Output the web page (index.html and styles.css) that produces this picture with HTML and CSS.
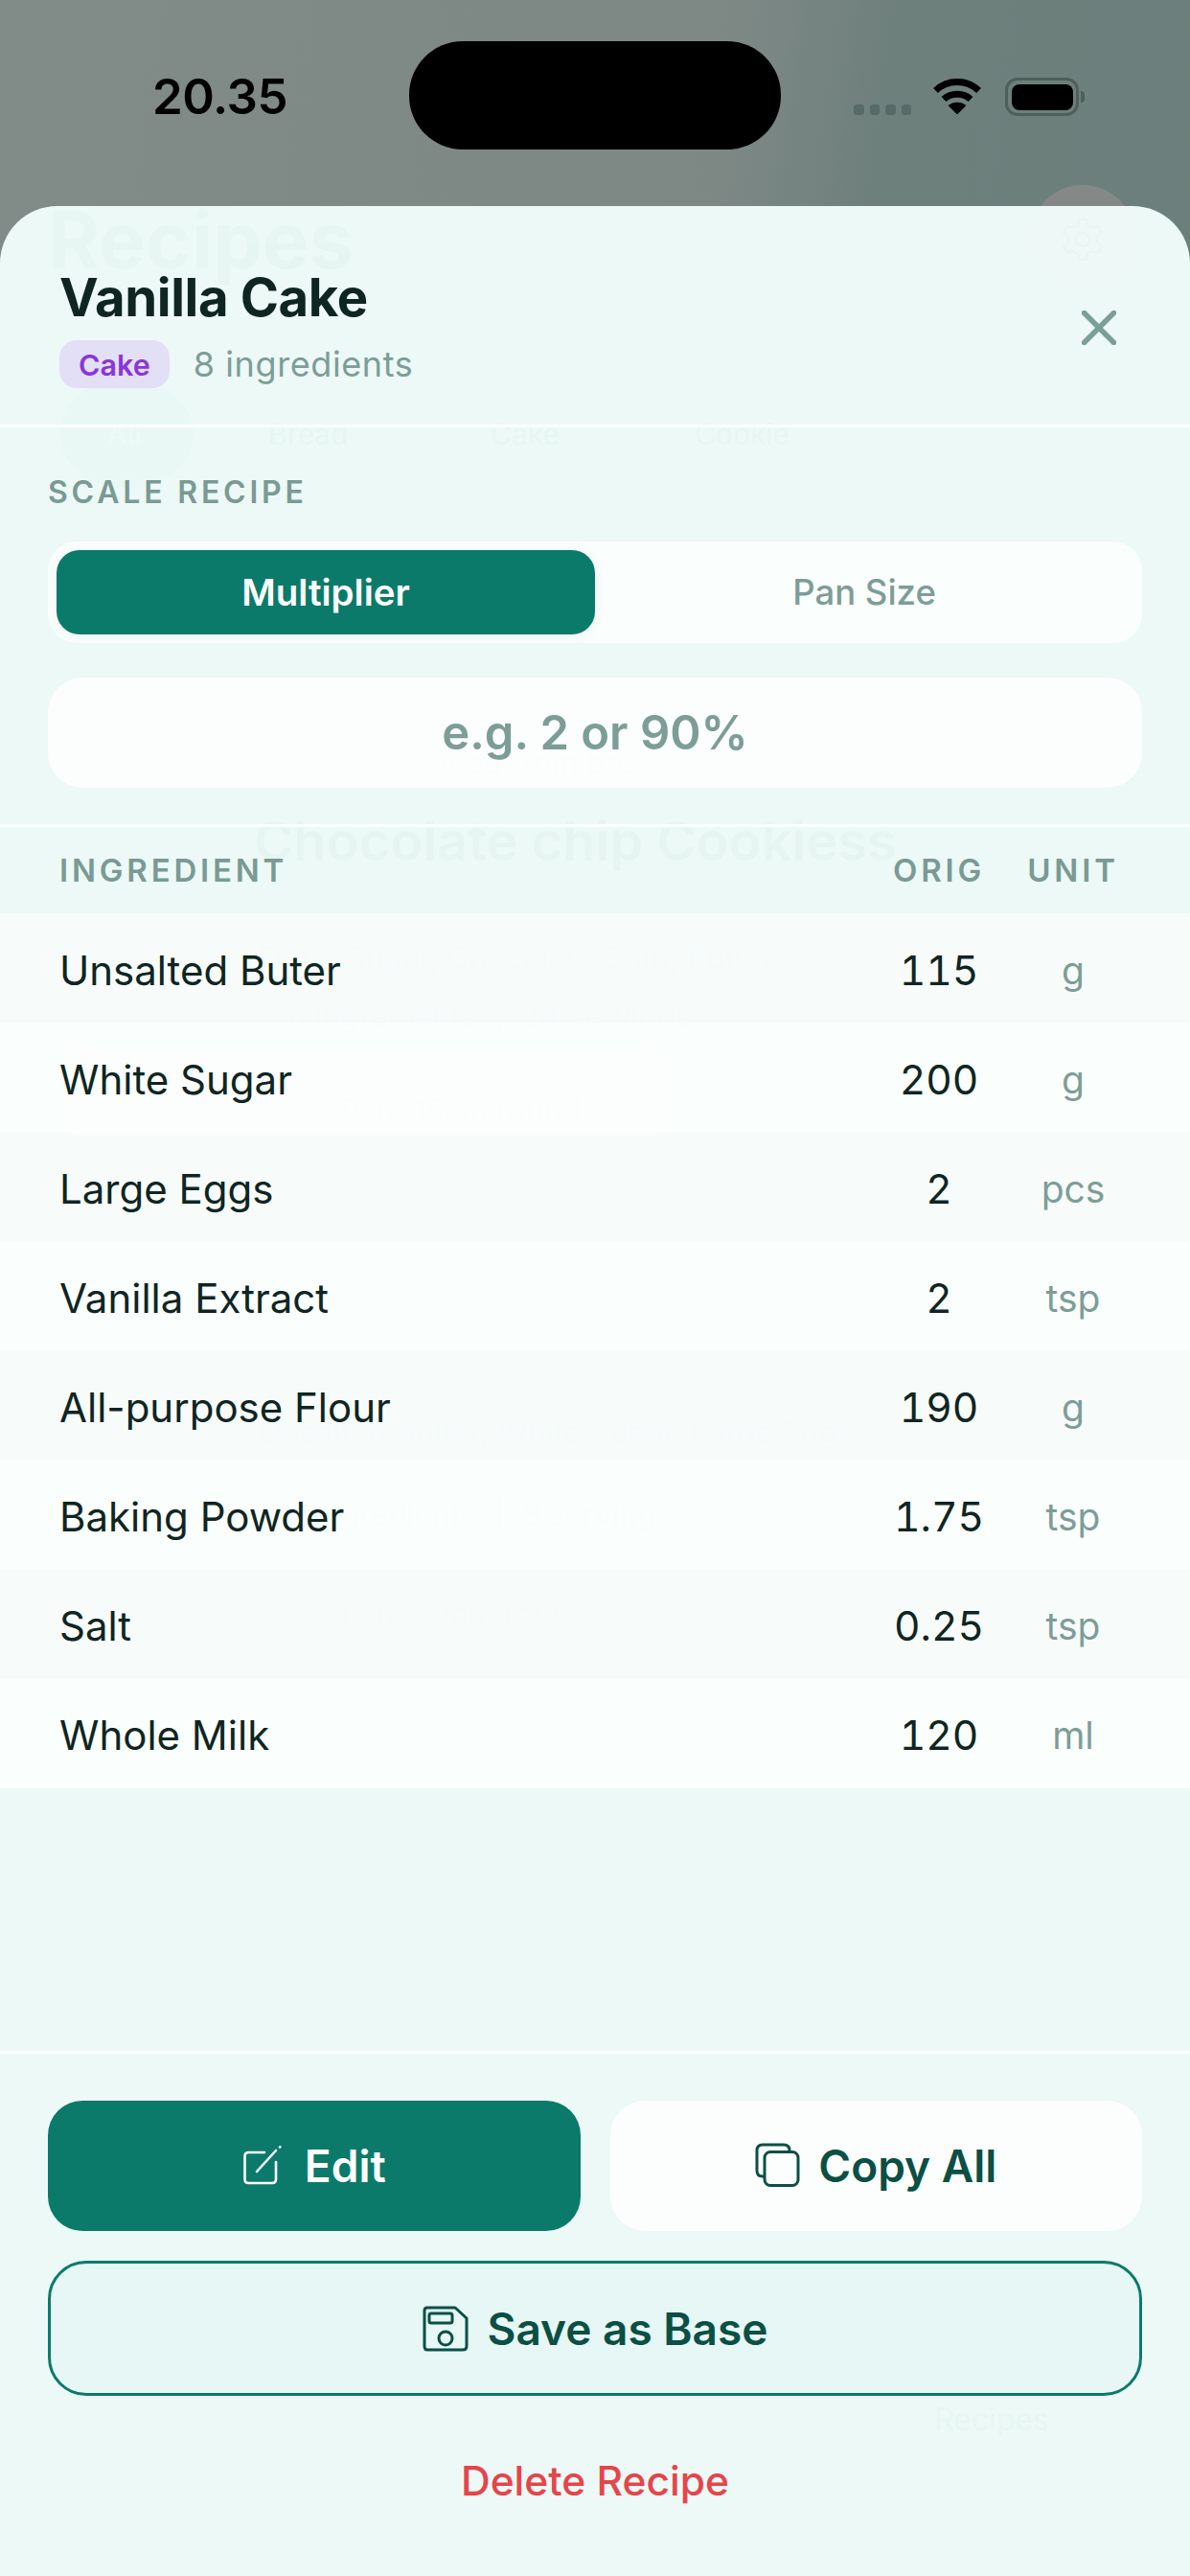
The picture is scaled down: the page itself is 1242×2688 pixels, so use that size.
FILE: index.html
```html
<!DOCTYPE html>
<html lang="en">
<head>
<meta charset="utf-8">
<title>Vanilla Cake</title>
<link rel="stylesheet" href="styles.css">
</head>
<body>
<div class="screen">
  <div class="gear-back"></div>
  <header class="status">
    <div class="time">20.35</div>
    <div class="island"></div>
    <div class="status-icons">
      <div class="signal"><i></i><i></i><i></i><i></i></div>
      <svg class="wifi" viewBox="0 0 52 38" width="52" height="38">
        <path d="M3.5 13.5C16 1.5 36 1.5 48.5 13.5" fill="none" stroke="#000" stroke-width="7"/>
        <path d="M12 22.5C19.5 15.500 32.500 15.500 40 22.500" fill="none" stroke="#000" stroke-width="7"/>
        <path d="M16.500 29C22 24.500 30 24.500 35.500 29L26 38.500Z" fill="#000"/>
      </svg>
      <div class="battery"><div class="battery-fill"></div></div>
      <div class="battery-nub"></div>
    </div>
  </header>

  <main class="sheet">
    <div class="ghosts" aria-hidden="true">
      <div class="g g-recipes">Recipes</div>
      <div class="g-circle g-gear"></div>
      <svg class="g-gear-icon" viewBox="0 0 48 48" width="48" height="48"><circle cx="24" cy="24" r="7" fill="none" stroke="#0d5046" stroke-width="2"/><path d="M20 3h8l1 6 5 3 6-2 4 7-5 4v6l5 4-4 7-6-2-5 3-1 6h-8l-1-6-5-3-6 2-4-7 5-4v-6l-5-4 4-7 6 2 5-3z" fill="none" stroke="#0d5046" stroke-width="2"/></svg>
      <div class="g-circle g-pill"></div>
      <div class="g g-tab g-t1">All</div>
      <div class="g g-tab g-t2">Bread</div>
      <div class="g g-tab g-t3">Cake</div>
      <div class="g g-tab g-t4">Cookie</div>
      <div class="g g-title g-c1">Chocolate chip Cookiess</div>
      <div class="g g-line g-c2">Flour, Sugar, Chocolate Chip, Butter</div>
      <div class="g g-line g-c3">6 ingredients &nbsp;|&nbsp; 24 servings</div>
      <div class="g-box"></div>
      <div class="g g-line g-c4">Pan: 15cm round</div>
      <div class="g g-line g-c5">Saved from base</div>
      <div class="g g-line g-c6">Unsalted Butter, White Sugar, Large Eggs...</div>
      <div class="g g-line g-c7">8 ingredients &nbsp;|&nbsp; 8 servings</div>
      <div class="g g-line g-c8">Pan: 20cm round</div>
      <div class="g g-line g-c9">Recipes</div>
    </div>

    <section class="head">
      <div class="head-text">
        <h1 class="title">Vanilla Cake</h1>
        <div class="meta">
          <span class="badge">Cake</span>
          <span class="count">8 ingredients</span>
        </div>
      </div>
      <svg class="close" viewBox="0 0 36 36" width="36" height="36"><path d="M2.500 2.500L33.500 33.500M33.500 2.500L2.500 33.500" stroke="#7a9f98" stroke-width="5.500" stroke-linecap="round" fill="none"/></svg>
    </section>

    <section class="scale">
      <div class="section-label">SCALE RECIPE</div>
      <div class="segment">
        <div class="seg-item seg-active">Multiplier</div>
        <div class="seg-item">Pan Size</div>
      </div>
      <div class="scale-input">e.g. 2 or 90%</div>
    </section>

    <section class="table">
      <div class="table-row table-head">
        <div>INGREDIENT</div>
        <div class="cell-c">ORIG</div>
        <div class="cell-c">UNIT</div>
      </div>
      <div class="table-row item"><div>Unsalted Buter</div><div class="cell-c num">115</div><div class="cell-c unit">g</div></div>
      <div class="table-row item"><div>White Sugar</div><div class="cell-c num">200</div><div class="cell-c unit">g</div></div>
      <div class="table-row item"><div>Large Eggs</div><div class="cell-c num">2</div><div class="cell-c unit">pcs</div></div>
      <div class="table-row item"><div>Vanilla Extract</div><div class="cell-c num">2</div><div class="cell-c unit">tsp</div></div>
      <div class="table-row item"><div>All-purpose Flour</div><div class="cell-c num">190</div><div class="cell-c unit">g</div></div>
      <div class="table-row item"><div>Baking Powder</div><div class="cell-c num">1.75</div><div class="cell-c unit">tsp</div></div>
      <div class="table-row item"><div>Salt</div><div class="cell-c num">0.25</div><div class="cell-c unit">tsp</div></div>
      <div class="table-row item"><div>Whole Milk</div><div class="cell-c num">120</div><div class="cell-c unit">ml</div></div>
    </section>

    <footer class="actions">
      <div class="action-row">
        <div class="btn btn-edit">
          <svg viewBox="0 0 42 42" width="42" height="42" fill="none" stroke="#fff" stroke-width="2.600" stroke-linecap="round" stroke-linejoin="round">
            <path d="M23 7H6.500Q2.500 7 2.500 11V35Q2.500 39 6.500 39H31Q35 39 35 35V17"/>
            <path d="M15 27L35 5"/>
            <path d="M39 1.500L39.300 1.200"/>
          </svg>
          <span>Edit</span>
        </div>
        <div class="btn btn-copy">
          <svg viewBox="0 0 48 48" width="48" height="48" fill="none" stroke="#0b4f45" stroke-width="3" stroke-linejoin="round">
            <rect x="10" y="9.500" width="35" height="35" rx="6"/>
            <path d="M10 35H8Q2 35 2 29V8Q2 2 8 2H30Q36 2 36 8V9.500"/>
          </svg>
          <span>Copy All</span>
        </div>
      </div>
      <div class="btn btn-save">
        <svg viewBox="0 0 48 48" width="48" height="48" fill="none" stroke="#0b4f45" stroke-width="3" stroke-linejoin="round">
          <path d="M5 2H34L46 13V42Q46 46 42 46H5Q2 46 2 42V5Q2 2 5 2Z"/>
          <rect x="7" y="8" width="24" height="10" rx="2"/>
          <circle cx="24" cy="34" r="7"/>
        </svg>
        <span>Save as Base</span>
      </div>
      <div class="delete">Delete Recipe</div>
    </footer>
  </main>
</div>
</body>
</html>
```
FILE: styles.css
```css
* { box-sizing: border-box; }
html, body { margin: 0; padding: 0; }
body { width: 1242px; height: 2688px; overflow: hidden; font-family: Inter, "Liberation Sans", sans-serif; }

.screen {
  position: relative;
  width: 1242px;
  height: 2688px;
  display: flex;
  flex-direction: column;
  background: linear-gradient(98deg, #818b88 0%, #7d8885 48%, #6e807c 58%, #6c7e7b 100%);
}
.gear-back {
  position: absolute;
  left: 1075px;
  top: 193px;
  width: 110px;
  height: 110px;
  border-radius: 50%;
  background: #848987;
}

/* status bar */
.status {
  position: relative;
  height: 215px;
  display: grid;
  grid-template-columns: 427px 388px 1fr;
  align-items: start;
  flex: none;
}
.time {
  padding: 71px 0 0 32px;
  text-align: center;
  font-size: 51px;
  font-weight: 600;
  line-height: 60px;
  letter-spacing: -0.5px;
  color: #000;
}
.island {
  margin-top: 43px;
  height: 113px;
  border-radius: 56px;
  background: #000;
}
.status-icons {
  padding: 81px 0 0 76px;
  display: flex;
  align-items: flex-start;
}
.signal { display: flex; gap: 6px; margin-top: 28px; margin-right: 22px; }
.signal i { display: block; width: 10.500px; height: 11px; border-radius: 3px; background: #566b67; }
.wifi { margin-right: 24px; }
.battery {
  width: 77px;
  height: 40px;
  border: 3.500px solid #4e5f5c;
  border-radius: 13px;
  padding: 3.500px;
}
.battery-fill { width: 100%; height: 100%; border-radius: 8px; background: #000; }
.battery-nub { width: 4px; height: 12px; margin: 14px 0 0 2px; border-radius: 0 6px 6px 0; background: #4e5f5c; }

/* sheet */
.sheet {
  position: relative;
  flex: 1;
  display: flex;
  flex-direction: column;
  background: #ecf9f6;
  border-radius: 60px 60px 0 0;
  overflow: hidden;
}
.head, .scale, .table, .actions { position: relative; z-index: 1; }

/* faint content of the page behind the sheet */
.ghosts { position: absolute; inset: 0; z-index: 0; }
.g { position: absolute; white-space: nowrap; color: #0d5046; opacity: .012; }
.g-recipes { left: 50px; top: 0; font-size: 82px; font-weight: 700; line-height: 72px; opacity: .016; }
.g-circle { position: absolute; border-radius: 50%; background: rgba(255,255,255,.12); }
.g-gear { left: 1075px; top: -22px; width: 110px; height: 110px; }
.g-gear-icon { position: absolute; left: 1106px; top: 11px; opacity: .025; }
.g-pill { left: 62px; top: 180px; width: 140px; height: 115px; background: rgba(13,80,70,.008); }
.g-tab { top: 220px; font-size: 30px; line-height: 36px; }
.g-t1 { left: 112px; color: #fff; opacity: .2; }
.g-t2 { left: 280px; }
.g-t3 { left: 512px; }
.g-t4 { left: 725px; }
.g-title { font-size: 56px; font-weight: 600; line-height: 70px; opacity: .016; }
.g-line { font-size: 32px; line-height: 40px; }
.g-c1 { left: 265px; top: 628px; }
.g-c2 { left: 268px; top: 765px; }
.g-c3 { left: 300px; top: 825px; }
.g-box { position: absolute; left: 65px; top: 880px; width: 630px; height: 90px; border-radius: 20px; background: rgba(255,255,255,.25); }
.g-c4 { left: 355px; top: 925px; }
.g-c5 { left: 430px; top: 562px; }
.g-c6 { left: 270px; top: 1260px; }
.g-c7 { left: 300px; top: 1345px; }
.g-c8 { left: 355px; top: 1450px; }
.g-c9 { left: 975px; top: 2290px; }

/* header */
.head {
  height: 231px;
  flex: none;
  border-bottom: 3px solid rgba(255,255,255,.85);
  display: flex;
  justify-content: space-between;
  padding: 62px 77px 0 62px;
}
.title {
  margin: 0;
  font-size: 54.500px;
  line-height: 66px;
  font-weight: 700;
  letter-spacing: -0.4px;
  color: #0f2522;
}
.meta { display: flex; align-items: center; gap: 25px; margin-top: 12px; }
.badge {
  height: 50px;
  padding: 0 20px;
  display: flex;
  align-items: center;
  border-radius: 18px;
  background: #e3dff6;
  color: #8a35dc;
  font-size: 30.500px;
  font-weight: 600;
}
.count { font-size: 36px; color: #7d9d97; letter-spacing: .6px; }
.close { margin-top: 47px; }

/* scale */
.scale {
  flex: none;
  height: 417px;
  padding: 50px 50px 0;
  border-bottom: 3px solid rgba(255,255,255,.85);
}
.section-label, .table-head {
  font-weight: 600;
  letter-spacing: 3.800px;
  color: #7a9a94;
}
.section-label { font-size: 32px; line-height: 36px; }
.segment {
  margin-top: 33px;
  height: 106px;
  padding: 9px;
  display: grid;
  grid-template-columns: 1fr 1fr;
  border-radius: 30px;
  background: rgba(255,255,255,.72);
}
.seg-item {
  display: flex;
  align-items: center;
  justify-content: center;
  font-size: 36.500px;
  font-weight: 500;
  color: #7d9d97;
}
.seg-active {
  border-radius: 24px;
  background: #0b7a6b;
  color: #fff;
  font-size: 38.500px;
  font-weight: 600;
  box-shadow: 0 2px 12px rgba(11,122,107,.08);
}
.scale-input {
  margin-top: 36px;
  height: 115px;
  display: flex;
  align-items: center;
  justify-content: center;
  border-radius: 36px;
  background: rgba(255,255,255,.78);
  font-size: 49px;
  font-weight: 600;
  color: #7d9d97;
}

/* table */
.table { flex: 1; }
.table-row {
  display: grid;
  grid-template-columns: 1fr 152px 128px;
  align-items: center;
  padding: 0 58px 0 62px;
}
.table-head { height: 90px; font-size: 33px; }
.cell-c { text-align: center; white-space: nowrap; }
.item {
  height: 114.100px;
  padding-top: 4px;
  font-size: 42px;
  color: #0f2522;
  background: rgba(255,255,255,.72);
}
.item:nth-child(even) { background: rgba(255,255,255,.56); }
.num { font-variant-numeric: tabular-nums; font-size: 42.500px; }
.unit { font-size: 39px; color: #7d9d97; }

/* footer */
.actions {
  flex: none;
  height: 548px;
  border-top: 3px solid rgba(255,255,255,.85);
  padding: 49px 50px 0;
}
.action-row { display: grid; grid-template-columns: 1fr 1fr; gap: 31px; }
.btn {
  display: flex;
  align-items: center;
  justify-content: center;
  gap: 23px;
  font-size: 46px;
  font-weight: 600;
}
.btn-edit { height: 136px; border-radius: 36px; background: #0b7a6b; color: #fff; }
.btn-copy { height: 136px; border-radius: 36px; background: rgba(255,255,255,.8); color: #0b4f45; gap: 18px; }
.btn-save {
  margin-top: 31px;
  height: 141px;
  border: 3px solid #0b7a6b;
  border-radius: 40px;
  background: #e6f7f5;
  color: #0b4f45;
  gap: 20px;
}
.delete {
  margin-top: 64px;
  text-align: center;
  font-size: 42.500px;
  font-weight: 500;
  line-height: 50px;
  color: #e5454b;
}
```
